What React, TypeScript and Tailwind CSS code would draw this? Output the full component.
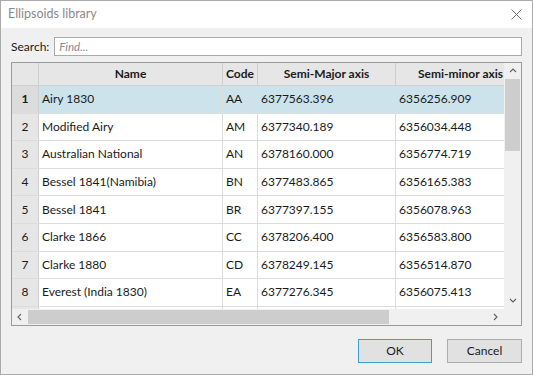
import { FC } from 'react';

const rows = [
  ['Airy 1830', 'AA', '6377563.396', '6356256.909'],
  ['Modified Airy', 'AM', '6377340.189', '6356034.448'],
  ['Australian National', 'AN', '6378160.000', '6356774.719'],
  ['Bessel 1841(Namibia)', 'BN', '6377483.865', '6356165.383'],
  ['Bessel 1841', 'BR', '6377397.155', '6356078.963'],
  ['Clarke 1866', 'CC', '6378206.400', '6356583.800'],
  ['Clarke 1880', 'CD', '6378249.145', '6356514.870'],
  ['Everest (India 1830)', 'EA', '6377276.345', '6356075.413'],
];

const cols = 'grid grid-cols-[27px_184px_35px_138px_130px]';

const Chevron: FC<{ dir: 'up' | 'down' | 'left' | 'right' }> = ({ dir }) => {
  const d = {
    up: 'M1 5 L4 2 L7 5',
    down: 'M1 2 L4 5 L7 2',
    left: 'M5 1 L2 4 L5 7',
    right: 'M2 1 L5 4 L2 7',
  }[dir];
  return (
    <svg width="8" height="8" viewBox="0 0 8 8" className="text-[#606060]">
      <path d={d} fill="none" stroke="currentColor" strokeWidth="1.1" />
    </svg>
  );
};

const App: FC = () => {
  return (
    <div
      className="w-[533px] h-[375px] bg-[#f0f0f0] border border-[#aaaaaa] flex flex-col text-[12px] text-[#1a1a1a] overflow-hidden"
      style={{ fontFamily: 'Lato, "Noto Sans", sans-serif' }}
    >
      {/* title bar */}
      <div className="h-[27px] bg-white flex items-center justify-between pl-[7px] pr-[10px] shrink-0">
        <span className="text-[#8a8a8a] text-[12.5px]">Ellipsoids library</span>
        <svg width="11" height="11" viewBox="0 0 11 11" className="text-[#777]">
          <path d="M0.5 0.5 L10.5 10.5 M10.5 0.5 L0.5 10.5" stroke="currentColor" strokeWidth="1" />
        </svg>
      </div>

      <div className="flex flex-col px-[10px] pt-[9px]">
        {/* search */}
        <div className="flex items-center gap-[5px] h-[19px]">
          <span>Search:</span>
          <div className="flex-1 h-[19px] bg-white border border-[#a9a9a9] flex items-center px-[4px]">
            <span className="italic text-[#8a8a8a] text-[11.5px]">Find...</span>
          </div>
        </div>

        {/* table */}
        <div className="mt-[6px] h-[264px] border border-[#9a9a9a] bg-[#f0f0f0] flex flex-col">
          <div className="flex h-[246px]">
            <div className="w-[493px] overflow-hidden bg-white">
              <div className={`${cols} h-[23px] bg-[#e6e6e6] border-b border-[#cfcfcf] font-bold`}>
                <div className="border-r border-[#cfcfcf]" />
                <div className="border-r border-[#cfcfcf] flex items-center justify-center">Name</div>
                <div className="border-r border-[#cfcfcf] flex items-center justify-center">Code</div>
                <div className="border-r border-[#cfcfcf] flex items-center justify-center">Semi-Major axis</div>
                <div className="border-r border-[#cfcfcf] flex items-center justify-center">Semi-minor axis</div>
              </div>
              {rows.map(([name, code, a, b], i) => {
                const sel = i === 0;
                return (
                  <div
                    key={name}
                    className={`${cols} h-[27.6px] border-b border-[#dcdcdc] ${sel ? 'bg-[#cce3eb]' : 'bg-white'}`}
                  >
                    <div
                      className={`flex items-center justify-center border-r border-[#cfcfcf] ${
                        sel ? 'bg-[#dcdcdc] font-bold' : 'bg-[#e6e6e6]'
                      }`}
                    >
                      {i + 1}
                    </div>
                    <div className="flex items-center pl-[3px] border-r border-[#dcdcdc]">{name}</div>
                    <div className="flex items-center pl-[3px] border-r border-[#dcdcdc]">{code}</div>
                    <div className="flex items-center pl-[3px] border-r border-[#dcdcdc]">{a}</div>
                    <div className="flex items-center pl-[3px] border-r border-[#dcdcdc]">{b}</div>
                  </div>
                );
              })}
              {/* partially visible next row */}
              <div className={`${cols} h-[27.6px] bg-white`}>
                <div className="bg-[#e6e6e6] border-r border-[#cfcfcf]" />
                <div className="border-r border-[#dcdcdc]" />
                <div className="border-r border-[#dcdcdc]" />
                <div className="border-r border-[#dcdcdc]" />
                <div className="border-r border-[#dcdcdc]" />
              </div>
            </div>
            {/* vertical scrollbar */}
            <div className="w-[17px] flex flex-col bg-[#f0f0f0]">
              <div className="h-[16px] flex items-center justify-center">
                <Chevron dir="up" />
              </div>
              <div className="flex-1 px-[1px]">
                <div className="h-[72px] bg-[#cdcdcd]" />
              </div>
              <div className="h-[16px] flex items-center justify-center">
                <Chevron dir="down" />
              </div>
            </div>
          </div>
          {/* horizontal scrollbar */}
          <div className="flex h-[16px]">
            <div className="w-[493px] flex bg-[#f0f0f0]">
              <div className="w-[16px] flex items-center justify-center">
                <Chevron dir="left" />
              </div>
              <div className="flex-1 py-[1px]">
                <div className="w-[361px] h-full bg-[#cdcdcd]" />
              </div>
              <div className="w-[16px] flex items-center justify-center">
                <Chevron dir="right" />
              </div>
            </div>
            <div className="w-[17px] bg-[#f0f0f0]" />
          </div>
        </div>

        {/* buttons */}
        <div className="flex justify-end gap-[15px] mt-[13px]">
          <button className="w-[74px] h-[24px] bg-[#e1e1e1] border border-[#3d9ecf]">OK</button>
          <button className="w-[75px] h-[24px] bg-[#e1e1e1] border border-[#adadad]">Cancel</button>
        </div>
      </div>
    </div>
  );
};

export default App;
